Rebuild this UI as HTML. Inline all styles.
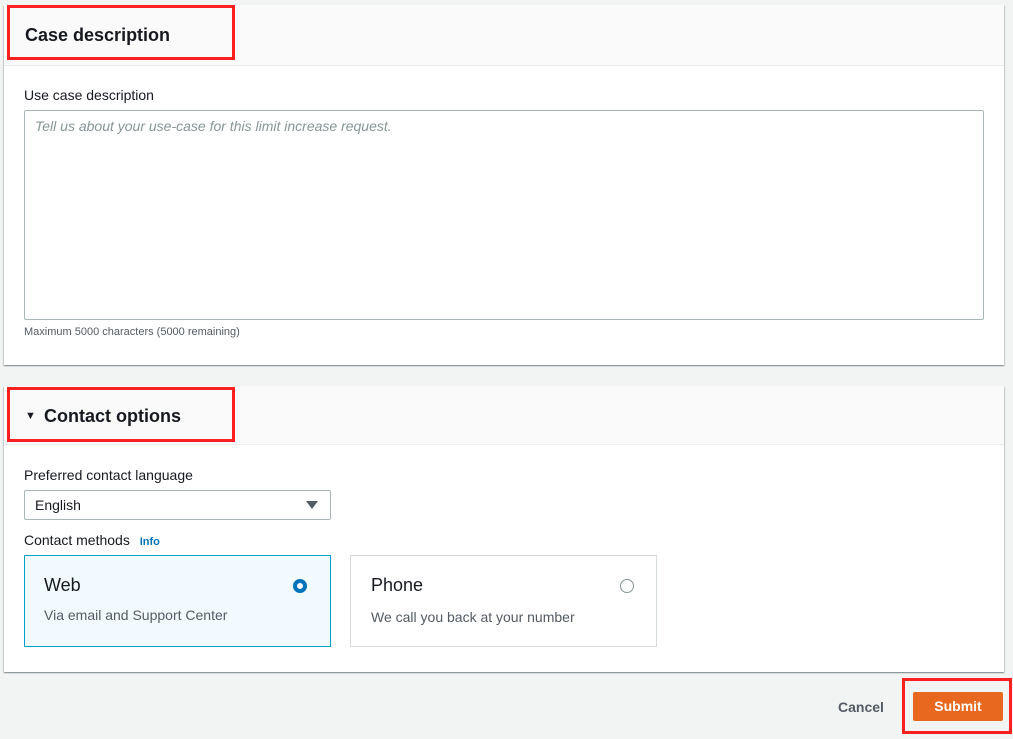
<!DOCTYPE html>
<html><head><style>
body{margin:0;width:1013px;height:739px;background:#f2f3f3;font-family:"Liberation Sans",sans-serif;position:relative;overflow:hidden;color:#16191f}
.a{position:absolute}
.panel{position:absolute;left:4px;width:1000px;background:#fff;box-shadow:0 1px 1px rgba(0,28,36,.3),1px 1px 1px rgba(0,28,36,.15),-1px 1px 1px rgba(0,28,36,.15)}
.hdr{position:absolute;left:0;top:0;width:1000px;background:#fafafa;border-bottom:1px solid #eaeded}
.red{position:absolute;border:3px solid #fa2020;box-sizing:border-box}
.lbl{font-size:14px;color:#16191f}
</style></head><body>
<div class="panel" style="top:5px;height:360px">
 <div class="hdr" style="height:60px"></div>
 <div class="a" style="left:21px;top:20px;font-size:18px;font-weight:bold">Case description</div>
 <div class="a lbl" style="left:20px;top:82px">Use case description</div>
 <div class="a" style="left:20px;top:105px;width:958px;height:208px;border:1px solid #aab7b8;border-radius:2px"></div>
 <div class="a" style="left:31px;top:113px;font-size:14px;font-style:italic;color:#879596">Tell us about your use-case for this limit increase request.</div>
 <div class="a" style="left:20px;top:321px;font-size:11px;color:#545b64">Maximum 5000 characters (5000 remaining)</div>
</div>
<div class="red" style="left:7px;top:5px;width:228px;height:55px"></div>
<div class="panel" style="top:386px;height:286px">
 <div class="hdr" style="height:58px"></div>
 <div class="a" style="left:21px;top:24px;font-size:11px">▼</div>
 <div class="a" style="left:40px;top:20px;font-size:18px;font-weight:bold">Contact options</div>
 <div class="a lbl" style="left:20px;top:81px">Preferred contact language</div>
 <div class="a" style="left:20px;top:104px;width:305px;height:28px;border:1px solid #aab7b8;border-radius:2px"></div>
 <div class="a lbl" style="left:31px;top:111px">English</div>
 <div class="a" style="left:302px;top:115px;width:0;height:0;border-left:6px solid transparent;border-right:6px solid transparent;border-top:8px solid #545b64"></div>
 <div class="a lbl" style="left:20px;top:146px">Contact methods <span style="font-size:11px;font-weight:bold;color:#0073bb;margin-left:6px">Info</span></div>
 <div class="a" style="left:20px;top:169px;width:305px;height:90px;border:1px solid #00a1c9;background:#f1faff"></div>
 <div class="a" style="left:40px;top:189px;font-size:18px">Web</div>
 <div class="a" style="left:40px;top:221px;font-size:14px;color:#545b64">Via email and Support Center</div>
 <div class="a" style="left:289px;top:193px;width:6px;height:6px;border:4px solid #0073bb;border-radius:50%;background:#fff"></div>
 <div class="a" style="left:346px;top:169px;width:305px;height:90px;border:1px solid #d5dbdb;background:#fff"></div>
 <div class="a" style="left:367px;top:189px;font-size:18px">Phone</div>
 <div class="a" style="left:367px;top:223px;font-size:14px;color:#545b64">We call you back at your number</div>
 <div class="a" style="left:616px;top:193px;width:12px;height:12px;border:1px solid #879596;border-radius:50%"></div>
</div>
<div class="red" style="left:7px;top:387px;width:228px;height:55px"></div>
<div class="a" style="left:838px;top:699px;font-size:14px;font-weight:bold;color:#545b64">Cancel</div>
<div class="a" style="left:913px;top:692px;width:90px;height:29px;background:#e9681f;border-radius:2px;color:#fff;font-size:14px;font-weight:bold;text-align:center;line-height:29px">Submit</div>
<div class="red" style="left:902px;top:678px;width:110px;height:56px"></div>
</body></html>
